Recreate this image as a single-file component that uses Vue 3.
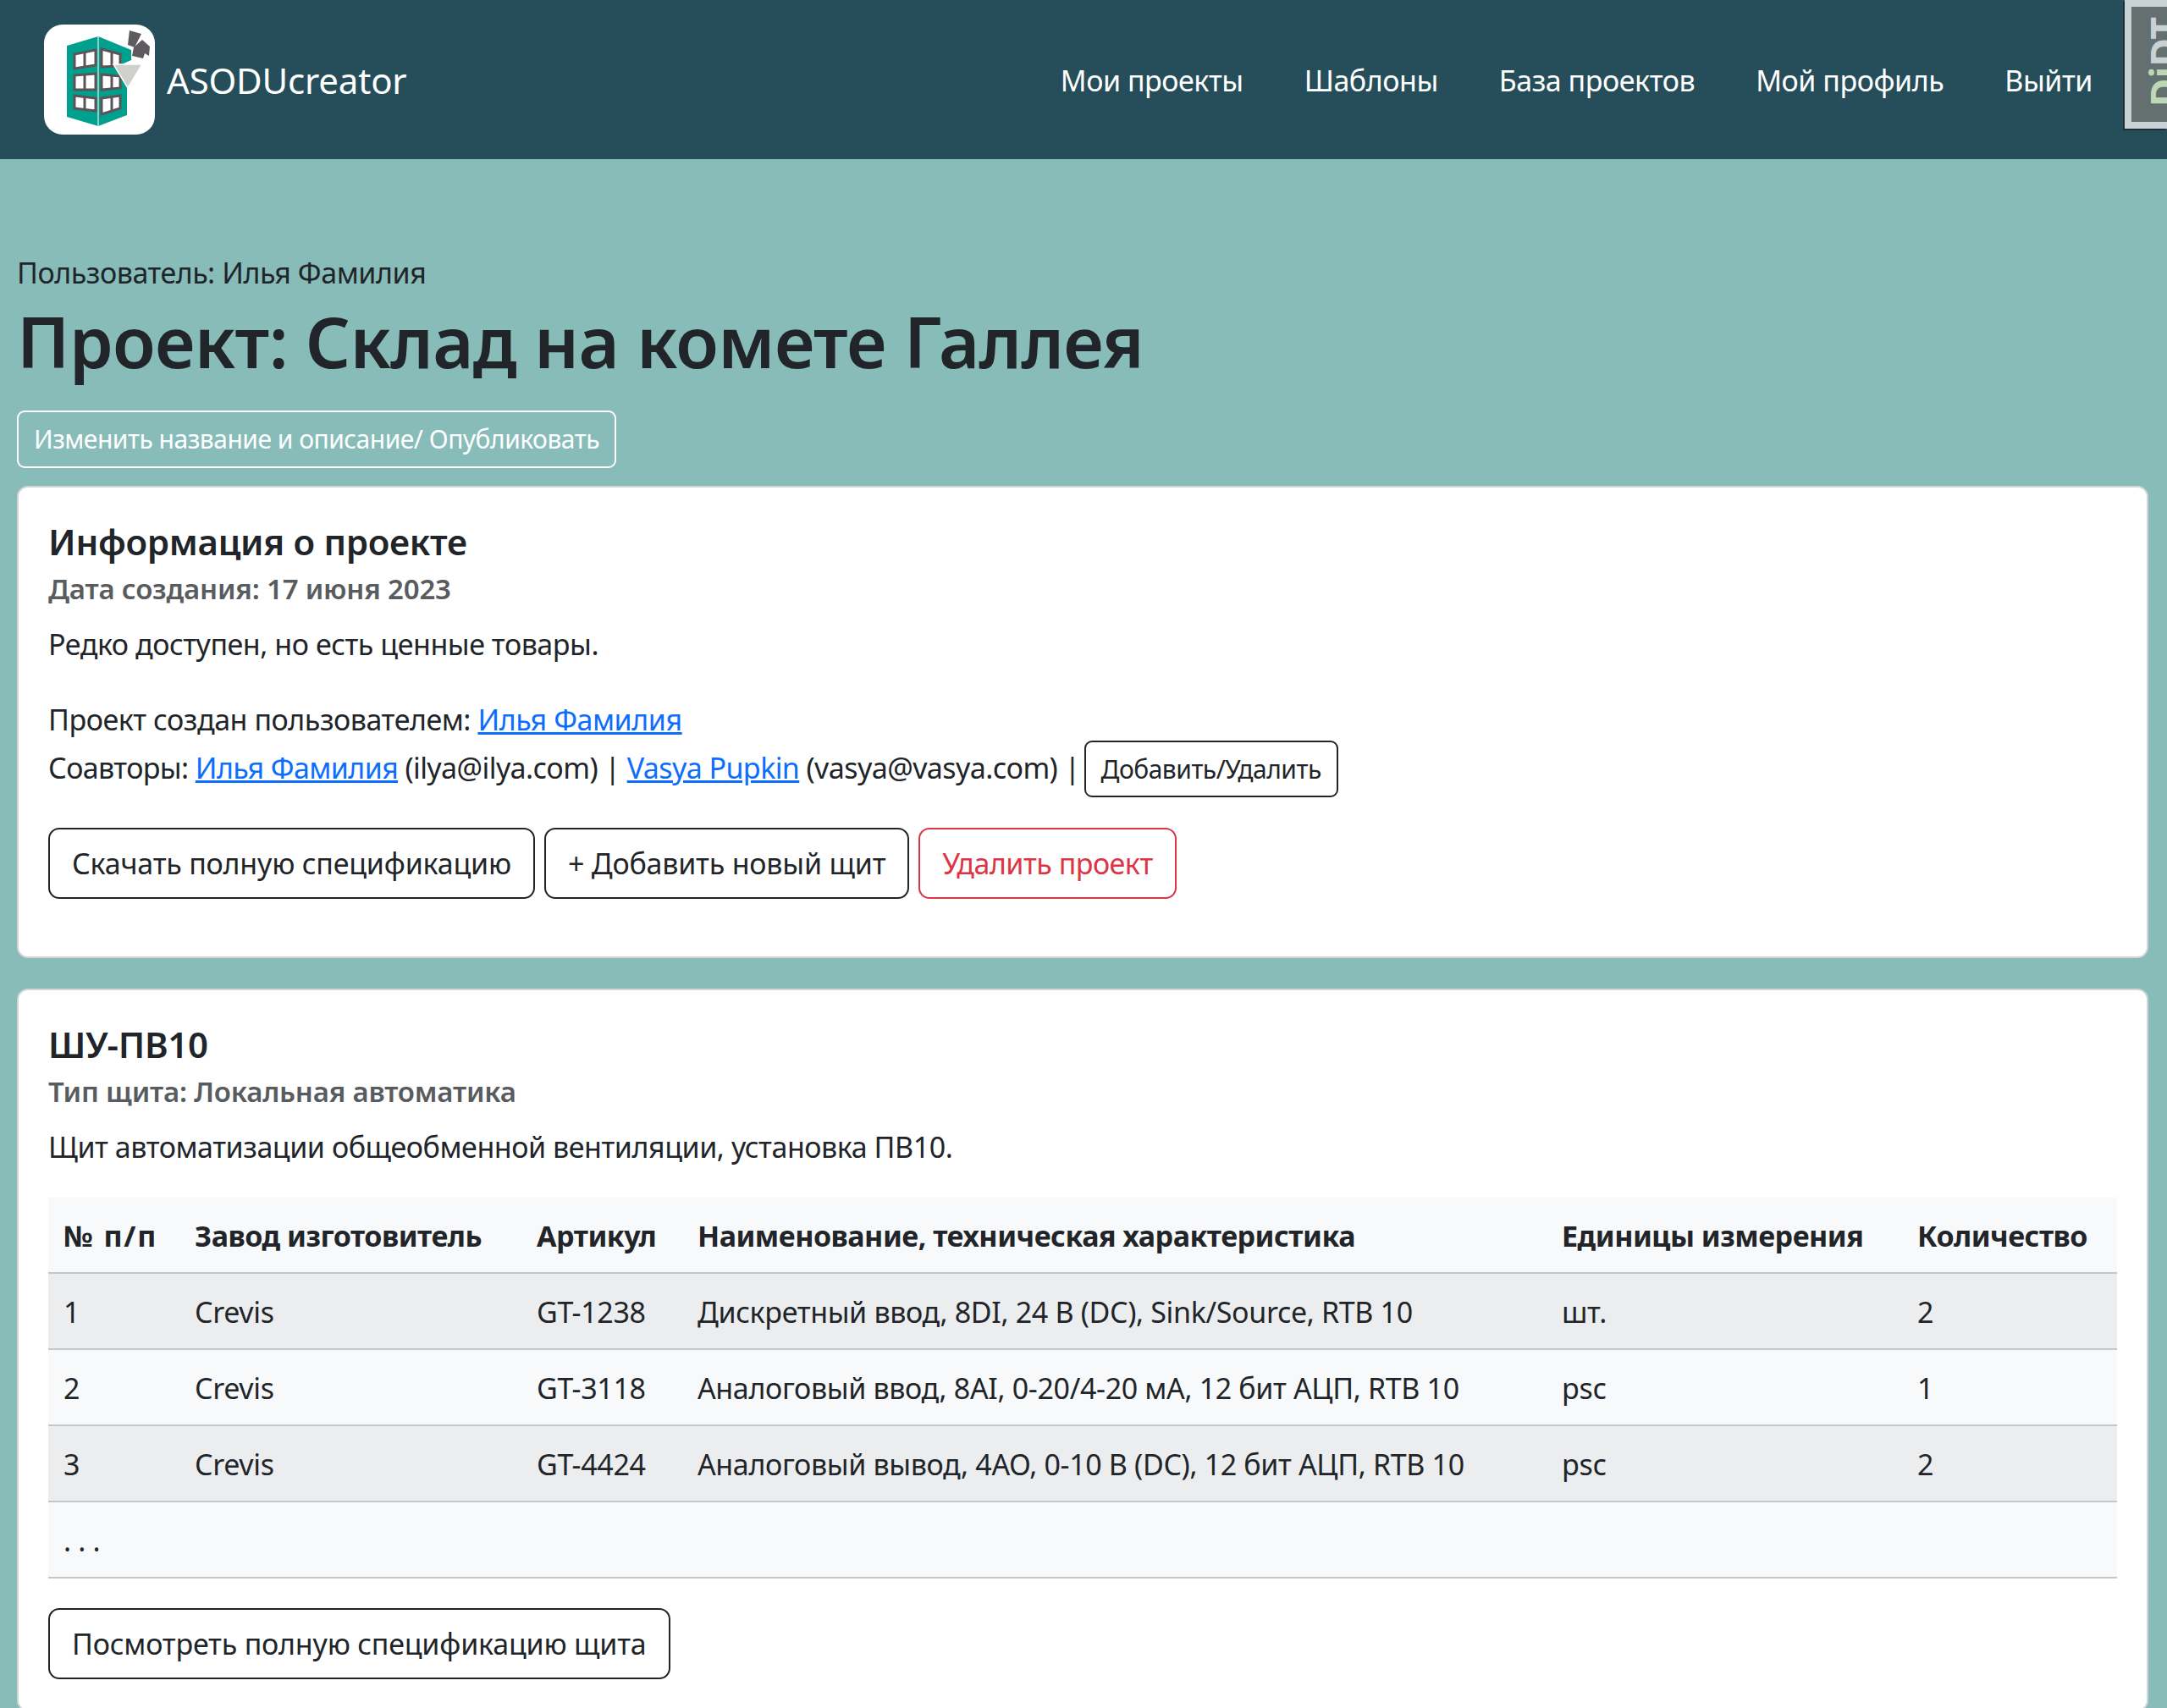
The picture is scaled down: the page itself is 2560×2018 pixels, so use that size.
<script setup>
const navLinks = ['Мои проекты', 'Шаблоны', 'База проектов', 'Мой профиль', 'Выйти']

const columns = [
  { title: '№ п/п', width: '155px' },
  { title: 'Завод изготовитель', width: '404px' },
  { title: 'Артикул', width: '190px' },
  { title: 'Наименование, техническая характеристика', width: '1021px' },
  { title: 'Единицы измерения', width: '420px' },
  { title: 'Количество', width: '254px' },
]

const rows = [
  { n: '1', maker: 'Crevis', code: 'GT-1238', name: 'Дискретный ввод, 8DI, 24 В (DC), Sink/Source, RTB 10', unit: 'шт.', qty: '2' },
  { n: '2', maker: 'Crevis', code: 'GT-3118', name: 'Аналоговый ввод, 8AI, 0-20/4-20 мА, 12 бит АЦП, RTB 10', unit: 'psc', qty: '1' },
  { n: '3', maker: 'Crevis', code: 'GT-4424', name: 'Аналоговый вывод, 4АО, 0-10 В (DC), 12 бит АЦП, RTB 10', unit: 'psc', qty: '2' },
]
</script>

<template>
  <div class="page">
    <nav class="navbar">
      <a class="brand">
        <span class="logo">
          <svg viewBox="0 0 131 130" width="131" height="130">
            <path d="M27 25 L64 14 L103 30 L103 42 L94 46 L98 70 L98 107 L64 120 L27 109 Z" fill="#00a08e" />
            <path d="M64 14 V120" stroke="#c8d8d4" stroke-width="1.5" />
            <g fill="#fff" stroke="#5a5458" stroke-width="3">
              <path d="M36 35 L61 30 V48 L36 52 Z" />
              <path d="M68 29 L90 35 V49 L68 50 Z" />
              <path d="M36 60 L61 58 V77 L36 77 Z" />
              <path d="M68 59 L90 61 V75 L68 77 Z" />
              <path d="M36 84 L61 87 V102 L36 99 Z" />
              <path d="M68 87 L90 84 V99 L68 106 Z" />
            </g>
            <path d="M48 33 V50 M48 59 V77 M48 86 V101 M80 32 V49 M80 60 V76 M80 86 V102" stroke="#5a5458" stroke-width="3" />
            <path d="M82 47 L116 47 L99 75 Z" fill="#cfcfcd" stroke="#fff" stroke-width="1.5" />
            <path d="M101 7 L115 11 L107 27 L99 24 Z" fill="#5f5a5f" />
            <path d="M104 37 L106 27 L116 18 L125 26 L124 37 L119 34 L117 40 Z" fill="#5f5a5f" />
          </svg>
        </span>
        <span class="brand-name">ASODUcreator</span>
      </a>
      <ul class="nav-links">
        <li v-for="link in navLinks" :key="link">{{ link }}</li>
      </ul>
      <div class="badge"><span class="badge-text"><span class="badge-green">Di</span>DT</span></div>
    </nav>

    <main class="content">
      <p class="user">Пользователь: Илья Фамилия</p>
      <h1 class="title">Проект: Склад на комете Галлея</h1>
      <button class="btn btn-sm btn-white">Изменить название и описание/ Опубликовать</button>

      <section class="card first-card">
        <h2 class="card-title">Информация о проекте</h2>
        <h3 class="card-sub">Дата создания: 17 июня 2023</h3>
        <p class="card-text">Редко доступен, но есть ценные товары.</p>
        <p class="line creator">Проект создан пользователем: <a>Илья Фамилия</a></p>
        <div class="line authors">
          <span>Соавторы: <a>Илья Фамилия</a> (ilya@ilya.com) | <a>Vasya Pupkin</a> (vasya@vasya.com) |</span>
          <button class="btn btn-sm btn-dark">Добавить/Удалить</button>
        </div>
        <div class="actions">
          <button class="btn btn-dark">Скачать полную спецификацию</button>
          <button class="btn btn-dark">+ Добавить новый щит</button>
          <button class="btn btn-red">Удалить проект</button>
        </div>
      </section>

      <section class="card">
        <h2 class="card-title">ШУ-ПВ10</h2>
        <h3 class="card-sub">Тип щита: Локальная автоматика</h3>
        <p class="card-text">Щит автоматизации общеобменной вентиляции, установка ПВ10.</p>
        <table class="spec">
          <colgroup>
            <col v-for="col in columns" :key="col.title" :style="{ width: col.width }" />
          </colgroup>
          <thead>
            <tr>
              <th v-for="col in columns" :key="col.title">{{ col.title }}</th>
            </tr>
          </thead>
          <tbody>
            <tr v-for="row in rows" :key="row.n">
              <td>{{ row.n }}</td>
              <td>{{ row.maker }}</td>
              <td>{{ row.code }}</td>
              <td>{{ row.name }}</td>
              <td>{{ row.unit }}</td>
              <td>{{ row.qty }}</td>
            </tr>
            <tr>
              <td>. . .</td>
              <td></td><td></td><td></td><td></td><td></td>
            </tr>
          </tbody>
        </table>
        <button class="btn btn-dark">Посмотреть полную спецификацию щита</button>
      </section>
    </main>
  </div>
</template>

<style>
html, body {
  margin: 0;
  background: #88bcb9;
}
</style>

<style scoped>
.page {
  height: 2018px;
  overflow: hidden;
  font-family: "Noto Sans", sans-serif;
  font-size: 34px;
  line-height: 54px;
  letter-spacing: -0.45px;
  color: #212529;
  background: #88bcb9;
}

.navbar {
  position: relative;
  height: 188px;
  background: #264e5a;
  display: flex;
  align-items: center;
  justify-content: space-between;
  padding: 0 88px 0 52px;
  box-sizing: border-box;
}
.brand {
  display: flex;
  align-items: center;
  gap: 14px;
  margin-top: -1px;
}
.logo {
  display: block;
  width: 131px;
  height: 130px;
  background: #fff;
  border-radius: 22px;
}
.logo svg {
  display: block;
}
.brand-name {
  color: #fff;
  font-size: 42px;
  letter-spacing: -0.2px;
  padding-top: 3px;
}
.nav-links {
  display: flex;
  gap: 72px;
  list-style: none;
  margin: 0;
  padding: 2px 0 0;
  color: #fff;
  letter-spacing: -0.45px;
}

.badge {
  position: absolute;
  top: 0;
  right: 0;
  width: 50px;
  height: 152px;
  box-sizing: border-box;
  background: #646f70;
  border: 8px solid #c8d2d4;
  border-right-width: 0;
  box-shadow: -2px 2px 0 #1c2f36;
  overflow: hidden;
}
.badge-text {
  position: absolute;
  left: 15px;
  top: 12px;
  font-size: 46px;
  line-height: 46px;
  font-weight: 700;
  letter-spacing: 0;
  color: #c8d2d4;
  writing-mode: vertical-rl;
  transform: rotate(180deg);
}
.badge-green {
  color: #bcd8b4;
}

.content {
  padding: 107px 22px 0 20px;
}
.user {
  margin: 0;
}
.title {
  margin: 1px 0 29px;
  font-size: 83px;
  line-height: 106px;
  font-weight: 600;
  letter-spacing: -0.65px;
}
.btn {
  display: inline-block;
  box-sizing: border-box;
  background: transparent;
  font-family: inherit;
  font-size: 34px;
  line-height: 54px;
  letter-spacing: -0.2px;
  padding: 13px 26px;
  border: 2px solid #212529;
  border-radius: 13px;
  color: #212529;
}
.btn-sm {
  font-size: 30px;
  line-height: 45px;
  letter-spacing: -0.5px;
  padding: 9px 18px;
  border-radius: 9px;
}
.btn-white {
  display: block;
  color: #fff;
  border-color: #fff;
  padding-bottom: 10px;
}
.btn-red {
  color: #dc3545;
  border-color: #dc3545;
  letter-spacing: -0.5px;
}

.card {
  background: #fff;
  border: 2px solid #d0d6d6;
  border-radius: 13px;
  padding: 38px 35px 36px;
}
.first-card {
  padding-bottom: 68px;
  margin-top: 21px;
}
.card + .card {
  margin-top: 36px;
}
.card-title {
  margin: 0;
  font-size: 42px;
  line-height: 52px;
  font-weight: 600;
  letter-spacing: -0.3px;
}
.card-sub {
  margin: 8px 0 0;
  font-size: 33px;
  line-height: 43px;
  font-weight: 600;
  letter-spacing: -0.2px;
  color: #595c5f;
}
.card-text {
  margin: 17px 0 0;
}
.line {
  margin: 0;
}
.line a {
  color: #0d6efd;
  text-decoration: underline;
}
.creator {
  margin-top: 35px;
}
.authors {
  display: flex;
  align-items: baseline;
  gap: 5px;
  margin-top: -2px;
  letter-spacing: -0.6px;
}
.actions {
  display: flex;
  gap: 11px;
  margin-top: 36px;
}

.spec {
  width: 100%;
  table-layout: fixed;
  border-collapse: collapse;
  margin: 33px 0 35px;
  background: #f8f9fa;
}
.spec th,
.spec td {
  padding: 18px 18px 16px;
  border-bottom: 2px solid #c6c7c8;
  text-align: left;
  font-weight: 400;
  height: 54px;
  white-space: nowrap;
  letter-spacing: -0.35px;
}
.spec th {
  font-weight: 700;
  letter-spacing: -0.5px;
}
.spec th:first-child {
  letter-spacing: 1.8px;
}
.spec tbody tr:nth-child(odd) {
  background: #ecedef;
}
</style>
